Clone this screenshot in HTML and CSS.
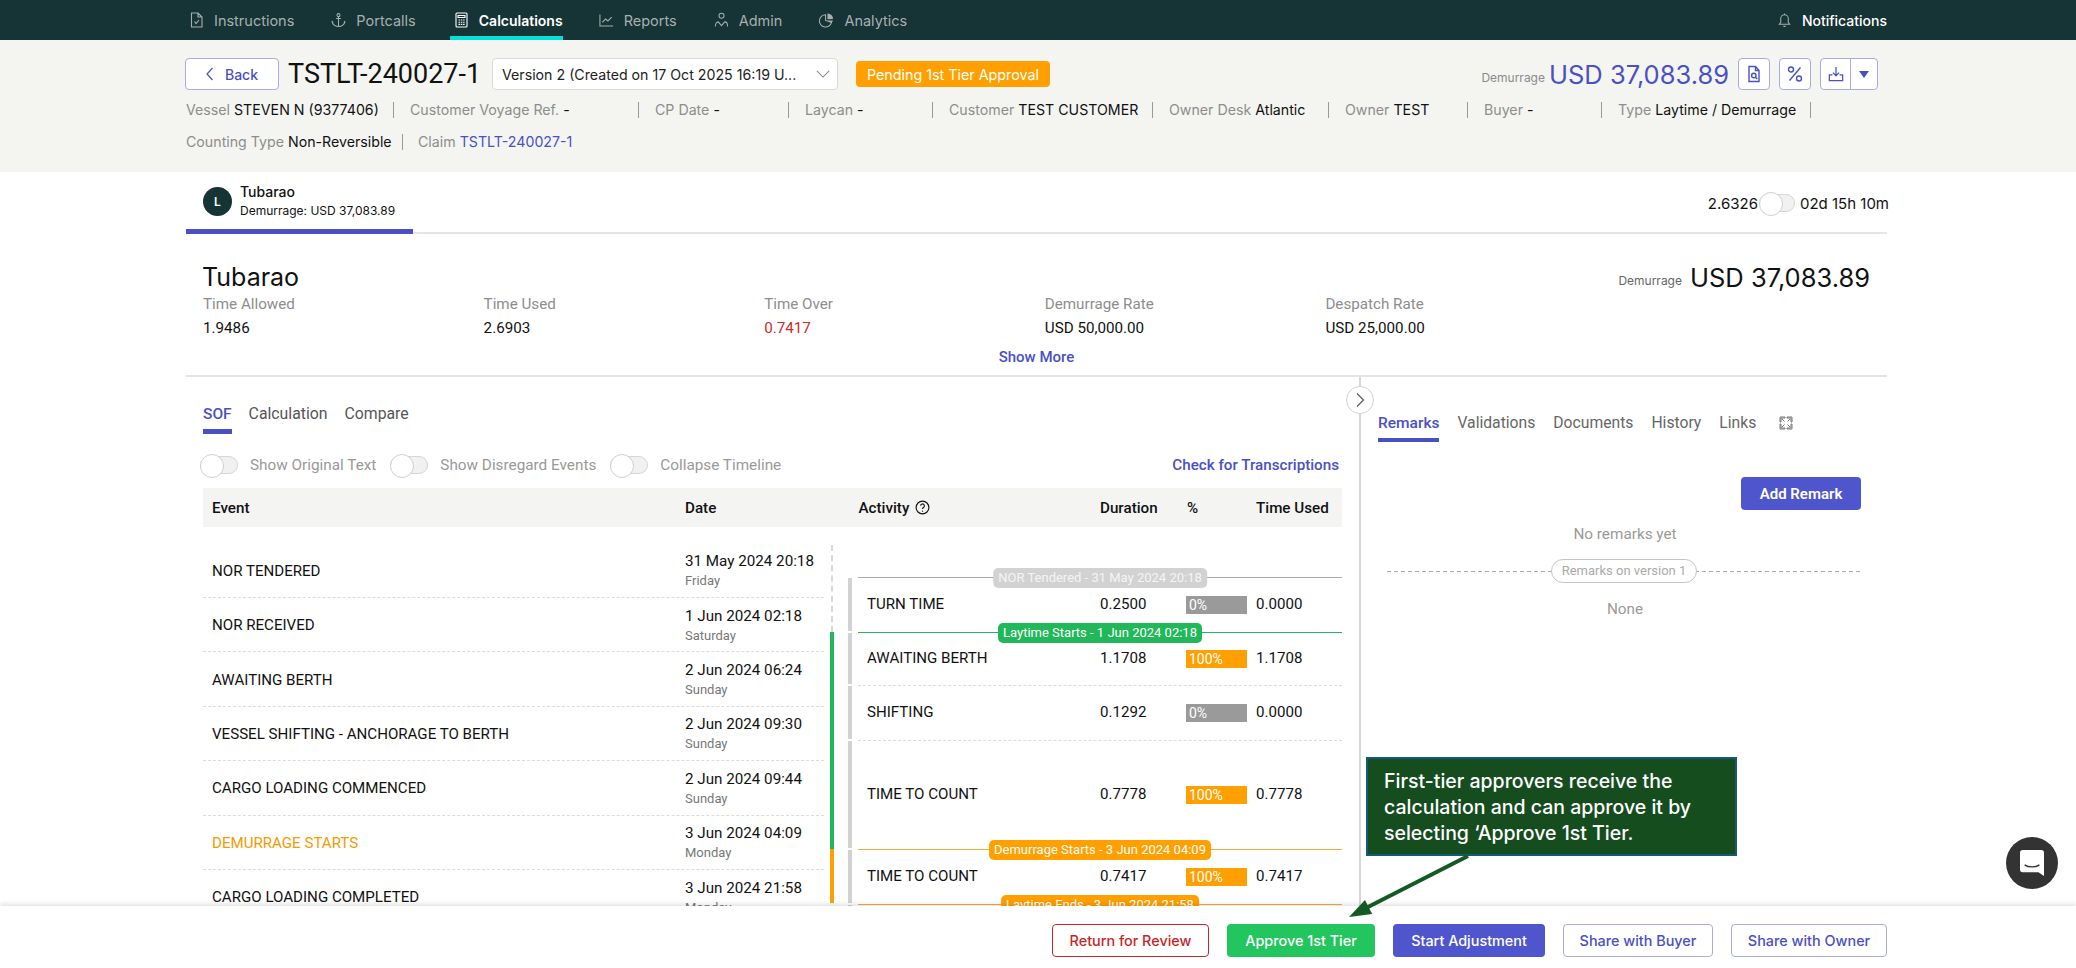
FILE: index.html
```
<!DOCTYPE html>
<html lang="en">
<head>
<meta charset="utf-8">
<title>TSTLT-240027-1</title>
<link rel="stylesheet" href="styles.css">
</head>
<body>
<nav class="nav">
  <a class="nav-item w-ins"><svg class="ic" viewBox="0 0 14 16"><path d="M2 1h6.500L12.500 5v10H2zM8.500 1v4h4M5 9.500l1.500 2 3-3.500"/></svg>Instructions</a>
  <a class="nav-item w-por"><svg class="ic" viewBox="0 0 16 16"><circle cx="8" cy="2.800" r="1.600"/><path d="M8 4.500V15M5.500 6.500h5M1 9l1.200 1.600M1 9.500c.5 3 3.500 5.500 7 5.500s6.500-2.500 7-5.500M15 9l-1.200 1.600"/></svg>Portcalls</a>
  <a class="nav-item active w-cal"><svg class="ic" viewBox="0 0 14 16"><rect x="1.500" y="1" width="11" height="14" rx="1"/><path d="M3.500 3.500h7v2h-7z"/><path d="M4 8h1.500M6.300 8h1.500M8.600 8h1.500M4 10.200h1.500M6.300 10.200h1.500M8.600 10.200h1.500M4 12.400h1.500M6.300 12.400h1.500M8.600 12.400h1.500"/></svg>Calculations</a>
  <a class="nav-item w-rep"><svg class="ic" viewBox="0 0 16 16"><path d="M1 2v12.500h14M3.500 10.500l3.500-3.500 2.500 2 4-4"/></svg>Reports</a>
  <a class="nav-item w-adm"><svg class="ic" viewBox="0 0 16 16"><circle cx="8" cy="3.500" r="2.700"/><path d="M1.500 15c0-3 1-5 3-5l3.500 4 3.500-4c2 0 3 2 3 5"/></svg>Admin</a>
  <a class="nav-item w-ana"><svg class="ic" viewBox="0 0 16 16"><path d="M7 2.500a6.500 6.500 0 1 0 6.300 8L7 8.500z"/><path class="solid" d="M9 1a6 6 0 0 1 6 6l-6 .2z"/><path class="solid" d="M9 8.500h6l-2 3z"/></svg>Analytics</a>
  <a class="nav-item bell"><svg class="ic" viewBox="0 0 16 16"><path d="M2.500 12.500h11l-1.500-2V6.500a4 4 0 0 0-8 0v4zM8 1v1.500M6.800 14.800h2.400"/></svg>Notifications</a>
</nav>

<header class="head">
  <div class="head-top">
    <button class="btn-back"><svg class="chev" viewBox="0 0 8 14"><path d="M6.500 1L1 7l5.500 6"/></svg>Back</button>
    <h1 class="title">TSTLT-240027-1</h1>
    <div class="select"><span>Version 2 (Created on 17 Oct 2025 16:19 U...</span><svg class="sel-arrow" viewBox="0 0 16 9"><path d="M1 1l7 7 7-7"/></svg></div>
    <span class="status">Pending 1st Tier Approval</span>
    <div class="head-right">
      <span class="dem-label">Demurrage</span>
      <span class="dem-val">USD 37,083.89</span>
      <button class="ibtn"><svg class="bi" viewBox="0 0 16 18"><path d="M3 1.500h6.500L13 5.500v11H3zM9.500 1.500v4H13"/><circle cx="7.800" cy="10.500" r="2.200"/><path d="M9.500 12.200l1.800 1.800"/></svg></button>
      <button class="ibtn"><svg class="bi" viewBox="0 0 16 18"><path d="M13.500 2.500l-11 13"/><circle cx="4" cy="4.500" r="2.500"/><circle cx="12" cy="13.500" r="2.500"/></svg></button>
      <div class="split">
        <button class="split-a"><svg class="bi" viewBox="0 0 18 18"><path d="M9 1v10M5.500 7.500L9 11l3.500-3.500M5 10H1.500v6.500h15V10H13"/></svg></button>
        <button class="split-b"><span class="tri"></span></button>
      </div>
    </div>
  </div>
  <div class="meta">
    <div class="m m1"><span>Vessel</span> STEVEN N (9377406)</div>
    <div class="m m2"><span>Customer Voyage Ref.</span> -</div>
    <div class="m m3"><span>CP Date</span> -</div>
    <div class="m m4"><span>Laycan</span> -</div>
    <div class="m m5"><span>Customer</span> TEST CUSTOMER</div>
    <div class="m m6"><span>Owner Desk</span> Atlantic</div>
    <div class="m m7"><span>Owner</span> TEST</div>
    <div class="m m8"><span>Buyer</span> -</div>
    <div class="m m9"><span>Type</span> Laytime / Demurrage</div>
  </div>
  <div class="meta meta2">
    <div class="m m10"><span>Counting Type</span> Non-Reversible</div>
    <div class="m last"><span>Claim</span> <a class="link">TSTLT-240027-1</a></div>
  </div>
</header>

<main class="page">
  <div class="port-bar">
    <div class="port-tab">
      <span class="avatar">L</span>
      <div class="port-txt"><strong>Tubarao</strong><small>Demurrage: USD 37,083.89</small></div>
    </div>
    <div class="port-right"><span>2.6326</span><span class="toggle sm"></span><span>02d 15h 10m</span></div>
  </div>

  <section class="summary">
    <div class="sum-head">
      <h2>Tubarao</h2>
      <div class="sum-dem"><span>Demurrage</span><b>USD 37,083.89</b></div>
    </div>
    <div class="stats">
      <div><label>Time Allowed</label><p>1.9486</p></div>
      <div><label>Time Used</label><p>2.6903</p></div>
      <div><label>Time Over</label><p class="red">0.7417</p></div>
      <div><label>Demurrage Rate</label><p>USD 50,000.00</p></div>
      <div><label>Despatch Rate</label><p>USD 25,000.00</p></div>
    </div>
    <a class="show-more">Show More</a>
  </section>

  <div class="split-panels">
    <section class="left">
      <div class="tabs">
        <a class="tab on">SOF</a><a class="tab">Calculation</a><a class="tab">Compare</a>
      </div>
      <div class="opts">
        <span class="toggle"></span><span class="opt">Show Original Text</span>
        <span class="toggle"></span><span class="opt">Show Disregard Events</span>
        <span class="toggle"></span><span class="opt">Collapse Timeline</span>
        <a class="check">Check for Transcriptions</a>
      </div>
      <div class="thead">
        <span class="th-event">Event</span>
        <span class="th-date">Date</span>
        <span class="th-act">Activity<svg class="help" viewBox="0 0 16 16"><circle cx="8" cy="8" r="6.800"/><path d="M6 6.200a2 2 0 1 1 3 1.700c-.7.400-1 .8-1 1.600"/><path d="M8 11.300v1.200"/></svg></span>
        <span class="th-dur">Duration</span>
        <span class="th-pct">%</span>
        <span class="th-used">Time Used</span>
      </div>
      <div class="tbody">
        <div class="events">
          <div class="ev"><span class="ev-n">NOR TENDERED</span><div class="ev-d">31 May 2024 20:18<small>Friday</small></div></div>
          <div class="ev"><span class="ev-n">NOR RECEIVED</span><div class="ev-d">1 Jun 2024 02:18<small>Saturday</small></div></div>
          <div class="ev"><span class="ev-n">AWAITING BERTH</span><div class="ev-d">2 Jun 2024 06:24<small>Sunday</small></div></div>
          <div class="ev"><span class="ev-n">VESSEL SHIFTING - ANCHORAGE TO BERTH</span><div class="ev-d">2 Jun 2024 09:30<small>Sunday</small></div></div>
          <div class="ev"><span class="ev-n">CARGO LOADING COMMENCED</span><div class="ev-d">2 Jun 2024 09:44<small>Sunday</small></div></div>
          <div class="ev"><span class="ev-n orange">DEMURRAGE STARTS</span><div class="ev-d">3 Jun 2024 04:09<small>Monday</small></div></div>
          <div class="ev"><span class="ev-n">CARGO LOADING COMPLETED</span><div class="ev-d">3 Jun 2024 21:58<small>Monday</small></div></div>
        </div>
        <div class="line"><i class="l-dash"></i><i class="l-green"></i><i class="l-orange"></i></div>
        <div class="acts">
          <div class="act h55 ln-grey"><span class="mark m-grey">NOR Tendered - 31 May 2024 20:18</span><span class="a-n">TURN TIME</span><span class="a-d">0.2500</span><span class="bar b0">0%</span><span class="a-u">0.0000</span></div>
          <div class="act h53 ln-green"><span class="mark m-green">Laytime Starts - 1 Jun 2024 02:18</span><span class="a-n">AWAITING BERTH</span><span class="a-d">1.1708</span><span class="bar b1">100%</span><span class="a-u">1.1708</span></div>
          <div class="act h55"><span class="a-n">SHIFTING</span><span class="a-d">0.1292</span><span class="bar b0">0%</span><span class="a-u">0.0000</span></div>
          <div class="act h109"><span class="a-n">TIME TO COUNT</span><span class="a-d">0.7778</span><span class="bar b1">100%</span><span class="a-u">0.7778</span></div>
          <div class="act h55 ln-orange"><span class="mark m-orange">Demurrage Starts - 3 Jun 2024 04:09</span><span class="a-n">TIME TO COUNT</span><span class="a-d">0.7417</span><span class="bar b1">100%</span><span class="a-u">0.7417</span></div>
          <div class="act h55 ln-orange"><span class="mark m-orange">Laytime Ends - 3 Jun 2024 21:58</span></div>
        </div>
      </div>
    </section>

    <aside class="right">
      <button class="collapse"><svg viewBox="0 0 10 16"><path d="M2 1.500L8.500 8 2 14.500"/></svg></button>
      <div class="rtabs">
        <a class="rtab on">Remarks</a><a class="rtab">Validations</a><a class="rtab">Documents</a><a class="rtab">History</a><a class="rtab">Links</a>
        <svg class="expand" viewBox="0 0 14 14"><path d="M1 6V1h5v1H2v4zM8 1h5v5h-1V2H8zM13 8v5H8v-1h4V8zM6 13H1V8h1v4h4zM3 3l2.500 2.500M11 3L8.500 5.500M11 11L8.500 8.500M3 11l2.500-2.500"/></svg>
      </div>
      <div class="r-action"><button class="add">Add Remark</button></div>
      <p class="none-yet">No remarks yet</p>
      <div class="rule"><span>Remarks on version 1</span></div>
      <p class="none">None</p>
    </aside>
  </div>
</main>

<footer class="foot">
  <button class="fb fb-red">Return for Review</button>
  <button class="fb fb-green">Approve 1st Tier</button>
  <button class="fb fb-blue">Start Adjustment</button>
  <button class="fb fb-out w-buyer">Share with Buyer</button>
  <button class="fb fb-out w-owner">Share with Owner</button>
</footer>

<div class="callout">First-tier approvers receive the calculation and can approve it by selecting ‘Approve 1st Tier.</div>
<svg class="arrow" viewBox="0 0 130 70"><path class="arrow-l" d="M125 1L25 52"/><path class="arrow-h" d="M6 62L22 44.900 29.200 59.100z"/></svg>
<button class="chat"><svg viewBox="0 0 26 28"><path class="chat-b" d="M3 0h20a3 3 0 0 1 3 3v25l-6-4H3a3 3 0 0 1-3-3V3a3 3 0 0 1 3-3z"/><path class="chat-s" d="M5 16c4 3 12 3 16 0"/></svg></button>
</body>
</html>
```
FILE: styles.css
```
* { box-sizing: border-box; }
html, body { margin: 0; height: 968px; overflow: hidden; background: #fff; }
body { font-family: Roboto, "Liberation Sans", sans-serif; font-size: 15px; color: #111; position: relative; }
h1, h2, p { margin: 0; font-weight: 400; }
button { font-family: inherit; cursor: pointer; }

.nav { height: 40px; background: #163335; display: flex; padding: 0 189px 0 189px; font-family: Inter, sans-serif; font-size: 14.500px; color: #a6b0b0; }
.nav-item { display: flex; align-items: center; gap: 10px; height: 40px; white-space: nowrap; }
.nav-item .ic { width: 15px; height: 16px; fill: none; stroke: currentColor; stroke-width: 1.100; flex: none; }
.nav-item .ic .solid { fill: currentColor; stroke: none; }
.nav-item.active { color: #fff; font-weight: 600; font-size: 14px; box-shadow: inset 0 -4px 0 #00e0d8; padding-left: 4px; margin-left: -4px; }
.w-ins { margin-right: 37px; }
.w-por { margin-right: 38px; }
.w-cal { margin-right: 36px; }
.w-rep { margin-right: 37px; }
.w-adm { margin-right: 37px; }
.nav-item.bell { margin-left: auto; color: #fff; font-weight: 500; font-size: 14px; }
.nav-item.bell .ic { color: #a6b0b0; }

.head { background: #f4f5f1; height: 132px; padding: 18px 189px 0 186px; font-family: Inter, sans-serif; }
.head-top { display: flex; align-items: center; height: 32px; }
.btn-back { width: 94px; height: 32px; margin-left: -1px; flex: none; background: #fff; border: 1px solid #a9abe8; border-radius: 4px; color: #4a50c4; font-size: 14px; font-weight: 500; display: flex; align-items: center; justify-content: center; gap: 11px; font-family: Inter, sans-serif; }
.chev { width: 8px; height: 14px; fill: none; stroke: #4a50c4; stroke-width: 1.200; }
.title { font-family: Roboto, sans-serif; font-size: 27px; margin: 0 11px 0 9px; width: 193px; flex: none; white-space: nowrap; color: #111; }
.select { width: 346px; height: 32px; flex: none; background: #fff; border: 1px solid #d9d9d9; border-radius: 4px; display: flex; align-items: center; justify-content: space-between; padding: 0 7px 0 9px; font-size: 14.200px; color: #222; white-space: nowrap; }
.sel-arrow { width: 14px; height: 8px; fill: none; stroke: #888; stroke-width: 1.200; }
.status { margin-left: 18px; width: 194px; height: 26px; background: #ffa000; color: #fff; border-radius: 4px; display: flex; align-items: center; justify-content: center; font-size: 14.300px; white-space: nowrap; }
.head-right { margin-left: auto; margin-right: 9px; display: flex; align-items: center; }
.dem-label { font-size: 12px; color: #8a8a8a; margin: 6px 4px 0 0; }
.dem-val { font-size: 25.500px; color: #4a50c4; margin-right: 9px; white-space: nowrap; }
.ibtn { width: 32px; height: 32px; padding: 0; background: #fff; border: 1px solid #a9abe8; border-radius: 4px; margin-right: 9px; display: flex; align-items: center; justify-content: center; }
.bi { width: 16px; height: 18px; fill: none; stroke: #4a50c4; stroke-width: 1.400; }
.split { display: flex; width: 58px; height: 32px; background: #fff; border: 1px solid #a9abe8; border-radius: 4px; }
.split-a { width: 30px; padding: 0; border: 0; border-right: 1px solid #a9abe8; background: none; display: flex; align-items: center; justify-content: center; }
.split-b { flex: 1; padding: 0; border: 0; background: none; display: flex; align-items: center; justify-content: center; }
.tri { width: 0; height: 0; border: 5px solid transparent; border-top: 7px solid #4a50c4; border-bottom: 0; }

.meta { display: flex; margin-top: 12px; height: 16px; font-size: 14.200px; line-height: 16px; color: #111; white-space: nowrap; }
.meta2 { margin-top: 16px; }
.m { height: 16px; border-right: 1px solid #999; margin-right: 16px; }
.m span { color: #8d8d8d; }
.m.last { border: 0; }
.m1 { width: 208px; } .m2 { width: 229px; } .m3 { width: 134px; } .m4 { width: 128px; } .m5 { width: 204px; } .m6 { width: 160px; } .m7 { width: 123px; } .m8 { width: 118px; } .m9 { width: 193px; } .m10 { width: 217px; margin-right: 15px; }
.link { color: #4a50c4; }

.page { padding: 0 189px 0 186px; }
.port-bar { height: 62px; border-bottom: 2px solid #e4e4e4; display: flex; justify-content: space-between; }
.port-tab { width: 227px; height: 62px; border-bottom: 5px solid #4a50c4; padding: 10px 0 0 17px; display: flex; gap: 8px; font-family: Inter, sans-serif; }
.avatar { width: 29px; height: 29px; margin-top: 5px; border-radius: 50%; background: #163335; color: #fff; font-size: 12px; font-weight: 600; display: flex; align-items: center; justify-content: center; }
.port-txt { display: flex; flex-direction: column; }
.port-txt strong { font-size: 14px; font-weight: 500; line-height: 20px; }
.port-txt small { font-size: 12px; line-height: 18px; }
.port-right { display: flex; align-items: center; font-size: 15px; font-family: Inter, sans-serif; margin-right: -2px; padding-top: 2px; }
.port-right .toggle { margin: 0 5px 0 1px; width: 36px; }
.toggle { display: inline-block; flex: none; width: 38px; height: 18px; border-radius: 9px; background: #f1f1f1; border: 1px solid #d6d6d6; position: relative; }
.toggle::before { content: ""; position: absolute; left: -1px; top: -3px; width: 22px; height: 22px; border-radius: 50%; background: #fff; border: 1px solid #cfcfcf; }

.summary { height: 143px; padding: 0 17px; border-bottom: 2px solid #e4e4e4; }
.sum-head { display: flex; justify-content: space-between; padding-top: 28px; height: 60px; }
.sum-head h2 { font-size: 25px; line-height: 30px; font-family: Inter, sans-serif; margin-left: -1px; }
.sum-dem { display: flex; align-items: center; gap: 8px; height: 30px; }
.sum-dem span { font-size: 12px; color: #666; margin-top: 7px; font-family: Inter, sans-serif; }
.sum-dem b { font-size: 25.500px; font-weight: 400; font-family: Inter, sans-serif; }
.stats { display: flex; font-size: 15.200px; }
.stats > div { width: 280.600px; }
.stats label { display: block; color: #8d8d8d; line-height: 20px; }
.stats p { line-height: 20px; margin-top: 4px; }
.stats .red { color: #cc2b2b; }
.show-more { display: block; text-align: center; margin: 10px 0 0; font-size: 15px; font-weight: 500; line-height: 18px; color: #4a50c4; }

.split-panels { display: flex; height: 530px; }
.left { width: 1175px; flex: none; padding-left: 17px; border-right: 2px solid #d8d8d8; overflow: hidden; }
.tabs { display: flex; gap: 17px; height: 57px; padding-top: 27px; font-size: 15.800px; color: #555; }
.tab { height: 30px; line-height: 20px; }
.tab.on { color: #4a50c4; font-weight: 500; border-bottom: 5px solid #4a50c4; font-size: 15.500px; }
.opts { height: 54px; padding-top: 8px; display: flex; align-items: center; width: 1136px; font-size: 15.300px; color: #999; }
.opts .toggle:first-child { margin-left: -3px; }
.opt { margin-left: 12px; margin-right: 14px; white-space: nowrap; }
.check { margin-left: auto; color: #4a50c4; font-weight: 500; font-size: 15.200px; white-space: nowrap; }
.thead { width: 1139px; height: 39px; background: #f4f5f3; display: flex; align-items: center; font-weight: 500; font-size: 15.200px; }
.th-event { width: 482px; padding-left: 9px; }
.th-date { width: 173.500px; }
.th-act { width: 241.500px; display: flex; align-items: center; gap: 6px; }
.help { width: 15px; height: 15px; fill: none; stroke: #111; stroke-width: 1.200; }
.th-dur { width: 87px; }
.th-pct { width: 69px; }
.tbody { display: flex; align-items: flex-start; height: 400px; }
.events { width: 621px; margin-top: 16.600px; flex: none; }
.ev { height: 54.400px; border-bottom: 1px dashed #dcdcdc; display: flex; align-items: center; justify-content: space-between; padding-left: 9px; font-size: 15.100px; }
.ev-n { margin-top: 1px; }
.ev-n.orange { color: #f49b00; }
.ev-d { width: 139px; line-height: 20px; margin-top: 2px; white-space: nowrap; font-size: 15.200px; }
.ev-d small { display: block; font-size: 13px; color: #777; }
.line { width: 4px; margin: 18px 0 0 6px; flex: none; display: flex; flex-direction: column; }
.line i { display: block; width: 4px; }
.l-dash { height: 87px; width: 2px !important; margin-left: 1px; border-left: 2px dashed #d8d8d8; }
.l-green { height: 217px; background: #20b858; }
.l-orange { height: 54px; background: #ffa000; }
.acts { width: 494px; margin: 50px 0 0 14px; flex: none; }
.act { position: relative; display: flex; align-items: center; margin-left: 10px; border-top: 1px dashed #dcdcdc; font-size: 15.100px; }
.act::before { content: ""; position: absolute; left: -10px; top: 0; bottom: 1px; width: 4px; background: #d2d2d2; }
.h55 { height: 55px; } .h53 { height: 53px; } .h109 { height: 109px; }
.ln-grey { border-top: 1px solid #a8a8a8; }
.ln-green { border-top: 1px solid #20b858; }
.ln-orange { border-top: 1px solid #f5ac3c; }
.a-n { width: 233px; margin-left: 9px; margin-top: -2px; }
.a-d { width: 86px; margin-top: -2px; }
.bar { width: 61px; height: 18px; line-height: 18px; color: #fff; font-size: 14px; padding-left: 3px; }
.b0 { background: #9a9a9a; }
.b1 { background: #ffa000; }
.a-u { margin-left: 9px; margin-top: -2px; }
.mark { position: absolute; left: 50%; top: -10px; transform: translateX(-50%); height: 20px; line-height: 20px; padding: 0 5px; border-radius: 5px; color: #fff; font-size: 13px; white-space: nowrap; }
.m-grey { background: #d2d2d2; color: #f5f5f5; }
.m-green { background: #20b858; }
.m-orange { background: #ffa000; }

.right { flex: 1; padding-left: 17px; position: relative; }
.collapse { position: absolute; left: -15px; top: 9px; width: 28px; height: 28px; padding: 0; border-radius: 50%; background: #fff; border: 1px solid #d0d0d0; display: flex; align-items: center; justify-content: center; }
.collapse svg { width: 10px; height: 16px; fill: none; stroke: #555; stroke-width: 1.100; }
.rtabs { display: flex; align-items: flex-start; gap: 18px; height: 66px; padding-top: 36px; font-size: 15.700px; color: #666; }
.rtab { height: 29px; line-height: 20px; }
.rtab.on { color: #4a50c4; font-weight: 500; border-bottom: 4px solid #4a50c4; font-size: 15.500px; }
.expand { width: 14px; height: 14px; margin: 3px 0 0 5px; fill: none; stroke: #777; stroke-width: 1; }
.r-action { display: flex; justify-content: flex-end; padding: 34px 26px 0 0; height: 67px; }
.add { width: 120px; height: 33px; background: #4f55cc; color: #fff; border: 0; border-radius: 4px; font-weight: 600; font-size: 15px; }
.none-yet, .none { text-align: center; color: #999; font-size: 15.300px; line-height: 20px; padding-right: 15px; }
.none-yet { margin-top: 14px; }
.rule { height: 24px; margin: 15px 26px 0 9px; display: flex; align-items: center; justify-content: center; background: repeating-linear-gradient(90deg, #aaa 0 4px, transparent 4px 7px) 0 11.500px / 100% 1px no-repeat; }
.rule span { height: 24px; line-height: 22px; padding: 0 10px; background: #fff; border: 1px solid #c4c4c4; border-radius: 12px; color: #aaa; font-size: 13px; white-space: nowrap; }
.none { margin-top: 16px; }

.foot { position: absolute; left: 0; right: 0; top: 906px; height: 62px; background: #fff; box-shadow: 0 -2px 5px rgba(0,0,0,.12); display: flex; justify-content: flex-end; align-items: flex-start; gap: 18px; padding: 18px 189px 0 0; }
.fb { height: 33px; border-radius: 4px; font-size: 14.400px; font-weight: 500; background: #fff; padding: 0; font-family: Inter, Roboto, sans-serif; }
.fb-red { width: 157px; border: 1px solid #c62828; color: #c62828; }
.fb-green { width: 148px; border: 0; background: #22c55e; color: #fff; }
.fb-blue { width: 152px; border: 0; background: #4f55cc; color: #fff; }
.fb-out { border: 1px solid #a9abe8; color: #4a50c4; }
.w-buyer { width: 150px; }
.w-owner { width: 156px; }

.callout { position: absolute; left: 1366px; top: 757px; width: 371px; height: 99px; background: #154d1f; border: 2px solid #125a78; color: #fff; font-size: 19.500px; font-weight: 500; line-height: 26px; padding: 9px 16px 0 16px; font-family: Inter, sans-serif; }
.arrow { position: absolute; left: 1343px; top: 855px; width: 130px; height: 70px; }
.arrow-l { stroke: #155a24; stroke-width: 4; fill: none; }
.arrow-h { fill: #155a24; }
.chat { position: absolute; left: 2006px; top: 837px; width: 52px; height: 52px; padding: 0; border: 0; border-radius: 50%; background: #333; display: flex; align-items: center; justify-content: center; }
.chat svg { width: 24px; height: 26px; }
.chat-b { fill: #fff; }
.chat-s { fill: none; stroke: #333; stroke-width: 1.500; }
```
